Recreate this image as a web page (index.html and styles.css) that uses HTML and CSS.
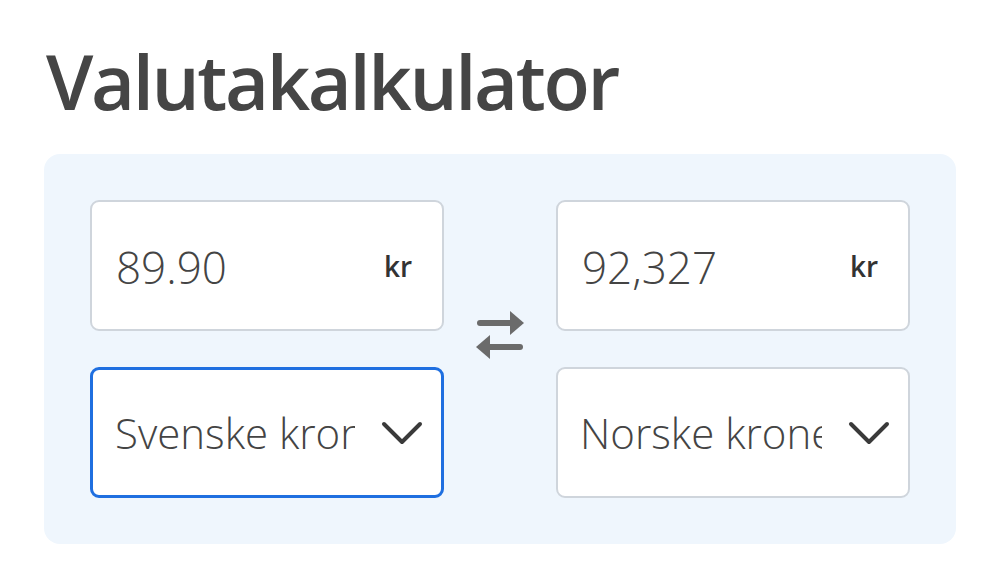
FILE: index.html
```html
<!DOCTYPE html>
<html lang="no">
<head>
<meta charset="utf-8">
<title>Valutakalkulator</title>
<link rel="stylesheet" href="styles.css">
</head>
<body>
<main class="page">
  <h1 class="title">Valutakalkulator</h1>
  <section class="panel">
    <div class="col">
      <div class="field">
        <span class="amount">89.90</span>
        <span class="unit">kr</span>
      </div>
      <div class="field select active">
        <span class="label">Svenske kroner</span>
        <svg class="chev" width="42" height="28" viewBox="0 0 42 28"><path d="M3 5 L21 23 L39 5" fill="none" stroke="#3a3a3a" stroke-width="4" stroke-linecap="round" stroke-linejoin="round"/></svg>
      </div>
    </div>
    <div class="swap">
      <svg width="56" height="50" viewBox="0 0 56 50"><path d="M8 12 H40" stroke="#6b6b6b" stroke-width="6" stroke-linecap="round"/><path d="M38 0 L52 12 L38 24 Z" fill="#6b6b6b"/><path d="M48 36 H16" stroke="#6b6b6b" stroke-width="6" stroke-linecap="round"/><path d="M18 24 L4 36 L18 48 Z" fill="#6b6b6b"/></svg>
    </div>
    <div class="col">
      <div class="field">
        <span class="amount">92,327</span>
        <span class="unit">kr</span>
      </div>
      <div class="field select">
        <span class="label">Norske kroner</span>
        <svg class="chev" width="42" height="28" viewBox="0 0 42 28"><path d="M3 5 L21 23 L39 5" fill="none" stroke="#3a3a3a" stroke-width="4" stroke-linecap="round" stroke-linejoin="round"/></svg>
      </div>
    </div>
  </section>
</main>
</body>
</html>
```
FILE: styles.css
```css
html, body {
  margin: 0;
  padding: 0;
  background: #ffffff;
}
.page {
  width: 1000px;
  height: 574px;
  padding: 0 44px;
  box-sizing: border-box;
  font-family: "Open Sans", "Noto Sans", sans-serif;
  color: #444444;
}
.title {
  margin: 0;
  padding: 36px 0 0 2px;
  height: 154px;
  box-sizing: border-box;
  font-size: 76px;
  font-weight: 600;
  line-height: 90px;
  letter-spacing: -2.4px;
  color: #454545;
}
.panel {
  width: 912px;
  height: 390px;
  box-sizing: border-box;
  background: #eff6fd;
  border-radius: 16px;
  padding: 46px;
  display: flex;
  align-items: stretch;
}
.col {
  width: 354px;
  display: flex;
  flex-direction: column;
  gap: 36px;
}
.swap {
  flex: 1;
  display: flex;
  align-items: center;
  justify-content: center;
  padding-bottom: 26px;
}
.field {
  height: 131px;
  box-sizing: border-box;
  background: #ffffff;
  border: 2px solid #cfd5dc;
  border-radius: 9px;
  display: flex;
  align-items: center;
  padding: 0 30px 0 24px;
}
.amount {
  flex: 1;
  font-size: 44px;
  font-weight: 300;
  color: #444;
  padding-top: 2px;
}
.unit {
  font-size: 28px;
  font-weight: 600;
  color: #333;
}
.select {
  padding: 0 18px 0 22px;
  gap: 26px;
}
.select.active {
  border: 3px solid #1f6fe0;
}
.label {
  flex: 1;
  overflow: hidden;
  white-space: nowrap;
  font-size: 42px;
  font-weight: 300;
  color: #444;
}
.chev {
  flex: none;
}
```
